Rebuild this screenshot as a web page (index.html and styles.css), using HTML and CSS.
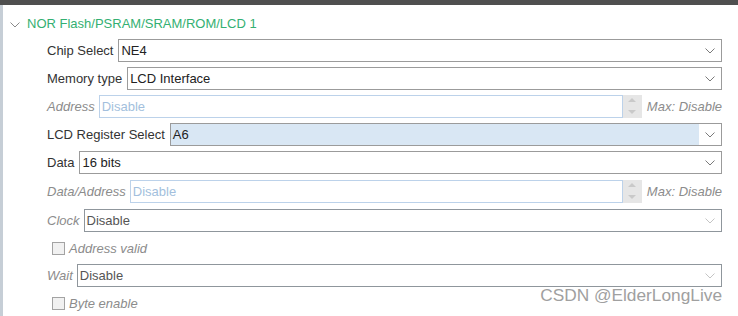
FILE: index.html
```html
<!DOCTYPE html>
<html lang="en">
<head>
    <meta charset="UTF-8">
    <title>NOR Flash/PSRAM/SRAM/ROM/LCD 1</title>
    <link rel="stylesheet" href="styles.css">
</head>
<body>
    <div class="topbar"></div>
    <div class="panel">
        <div class="group-title">
            <svg class="toggle" width="10" height="6" viewBox="0 0 10 6"><polyline points="0.5,0.5 5,5 9.5,0.5" fill="none" stroke="#8a8a8a" stroke-width="1"/></svg>
            <span>NOR Flash/PSRAM/SRAM/ROM/LCD 1</span>
        </div>
        <div class="fields">
            <div class="field">
                <span class="label">Chip Select</span>
                <div class="select"><span class="value">NE4</span><span class="arrow"><svg width="10" height="6" viewBox="0 0 10 6"><polyline points="0.5,0.5 5,5 9.5,0.5" fill="none" stroke="#7a7a7a" stroke-width="1"/></svg></span></div>
            </div>
            <div class="field">
                <span class="label">Memory type</span>
                <div class="select"><span class="value">LCD Interface</span><span class="arrow"><svg width="10" height="6" viewBox="0 0 10 6"><polyline points="0.5,0.5 5,5 9.5,0.5" fill="none" stroke="#7a7a7a" stroke-width="1"/></svg></span></div>
            </div>
            <div class="field disabled">
                <span class="label">Address</span>
                <div class="spin-input"><span class="value">Disable</span></div>
                <div class="spinner"><span class="up"></span><span class="down"></span></div>
                <span class="max">Max: Disable</span>
            </div>
            <div class="field">
                <span class="label">LCD Register Select</span>
                <div class="select selected"><span class="value">A6</span><span class="arrow"><svg width="10" height="6" viewBox="0 0 10 6"><polyline points="0.5,0.5 5,5 9.5,0.5" fill="none" stroke="#7a7a7a" stroke-width="1"/></svg></span></div>
            </div>
            <div class="field">
                <span class="label">Data</span>
                <div class="select"><span class="value">16 bits</span><span class="arrow"><svg width="10" height="6" viewBox="0 0 10 6"><polyline points="0.5,0.5 5,5 9.5,0.5" fill="none" stroke="#7a7a7a" stroke-width="1"/></svg></span></div>
            </div>
            <div class="field disabled shift">
                <span class="label">Data/Address</span>
                <div class="spin-input"><span class="value">Disable</span></div>
                <div class="spinner"><span class="up"></span><span class="down"></span></div>
                <span class="max">Max: Disable</span>
            </div>
            <div class="field disabled shift">
                <span class="label">Clock</span>
                <div class="select locked"><span class="value">Disable</span><span class="arrow"><svg width="10" height="6" viewBox="0 0 10 6"><polyline points="0.5,0.5 5,5 9.5,0.5" fill="none" stroke="#c4c4c4" stroke-width="1"/></svg></span></div>
            </div>
            <div class="check"><span class="box"></span><span class="check-label">Address valid</span></div>
            <div class="field disabled">
                <span class="label">Wait</span>
                <div class="select locked"><span class="value">Disable</span><span class="arrow"><svg width="10" height="6" viewBox="0 0 10 6"><polyline points="0.5,0.5 5,5 9.5,0.5" fill="none" stroke="#c4c4c4" stroke-width="1"/></svg></span></div>
            </div>
            <div class="check"><span class="box"></span><span class="check-label">Byte enable</span></div>
        </div>
    </div>
    <div class="watermark">CSDN @ElderLongLive</div>
</body>
</html>
```

FILE: styles.css
```css
body {
    margin: 0;
    font-family: 'Liberation Sans', Arial, sans-serif;
    font-size: 13px;
    color: #333;
    background-color: #ffffff;
    height: 316px;
    overflow: hidden;
    position: relative;
}
.topbar {
    height: 5px;
    background-color: #4f4f4f;
}
.panel {
    border-left: 3px solid #c6ced6;
    height: 311px;
    box-sizing: border-box;
}
.group-title {
    display: flex;
    align-items: center;
    padding: 11px 0 7px 7px;
    line-height: 16px;
    color: #34b072;
}
.group-title .toggle {
    margin-right: 7px;
    margin-top: 1px;
}
.fields {
    display: flex;
    flex-direction: column;
    gap: 5px;
    padding: 0 16px 0 44px;
}
.field {
    display: flex;
    align-items: center;
    height: 23px;
}
.field.shift {
    margin-top: 1px;
}
.label {
    margin-right: 5px;
    white-space: nowrap;
}
.field.disabled .label {
    font-style: italic;
    color: #8c8c8c;
    margin-right: 4px;
}
.select {
    flex: 1;
    display: flex;
    height: 23px;
    box-sizing: border-box;
    border: 1px solid #9b9b9b;
    color: #222;
}
.select .value {
    flex: 1;
    padding-left: 2px;
    line-height: 21px;
}
.select .arrow {
    width: 22px;
    display: flex;
    align-items: center;
    justify-content: center;
    background-color: #fff;
}
.select.selected .value {
    background-color: #d9e7f4;
}
.select.locked {
    border-color: #8f969c;
}
.select.locked .value {
    color: #555;
}
.spin-input {
    flex: 1;
    height: 23px;
    box-sizing: border-box;
    border: 1px solid #bcd2ea;
}
.spin-input .value {
    display: block;
    padding-left: 2px;
    line-height: 21px;
    color: #a3bfdd;
}
.spinner {
    width: 19px;
    height: 23px;
    background-color: #e6e6e6;
    display: flex;
    flex-direction: column;
    justify-content: space-between;
    align-items: center;
    padding: 3px 0 4px;
    box-sizing: border-box;
}
.spinner .up {
    width: 0;
    height: 0;
    border-left: 4px solid transparent;
    border-right: 4px solid transparent;
    border-bottom: 4px solid #c9c9c9;
}
.spinner .down {
    width: 0;
    height: 0;
    border-left: 4px solid transparent;
    border-right: 4px solid transparent;
    border-top: 4px solid #c9c9c9;
}
.max {
    margin-left: 5px;
    font-style: italic;
    color: #8c8c8c;
    white-space: nowrap;
}
.check {
    display: flex;
    align-items: center;
    height: 22px;
    padding-left: 5px;
}
.check .box {
    width: 11px;
    height: 11px;
    border: 1px solid #a3a3a3;
    background-color: #f1f1f1;
    margin-right: 4px;
}
.check-label {
    font-style: italic;
    color: #8c8c8c;
}
.watermark {
    position: absolute;
    right: 16px;
    top: 285px;
    font-size: 17.3px;
    color: #a0a0a0;
}
```
